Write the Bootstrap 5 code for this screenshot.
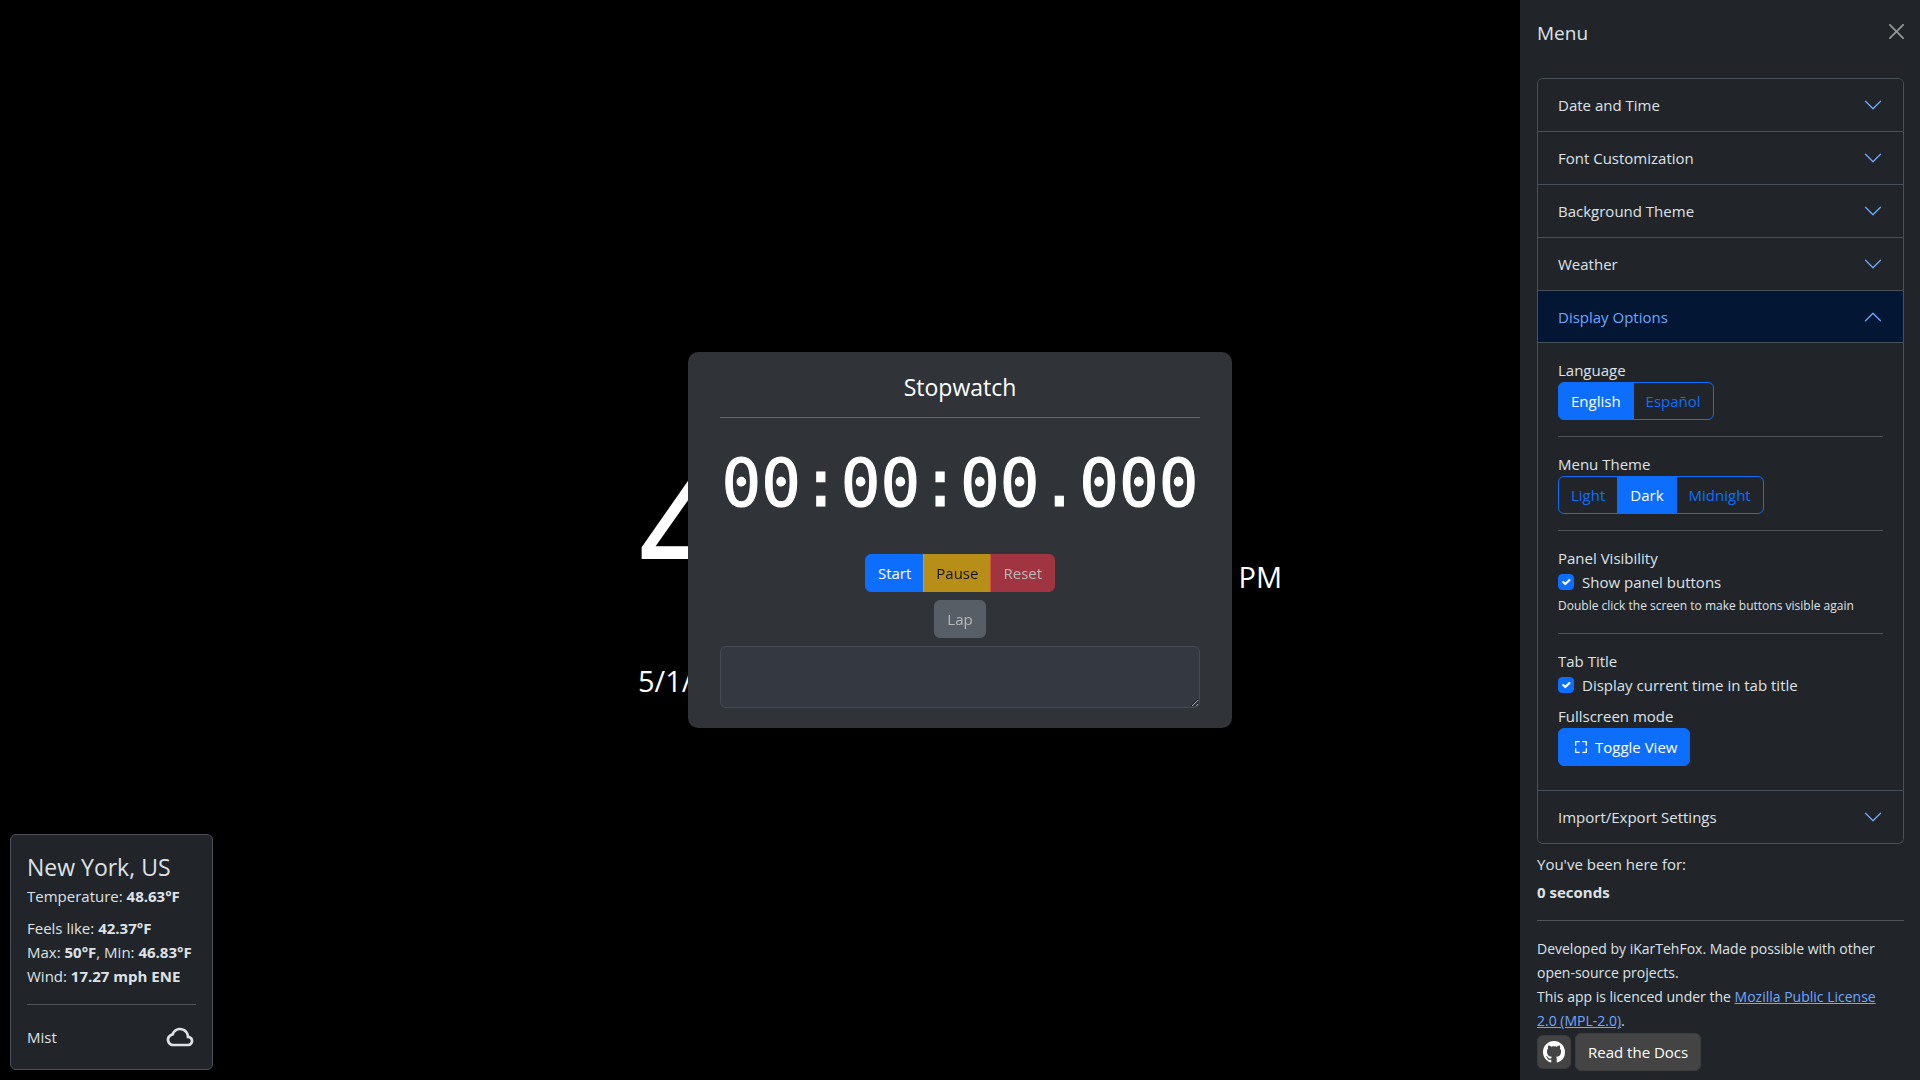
<!DOCTYPE html>
<html lang="en" data-bs-theme="dark">
<head>
<meta charset="utf-8">
<meta name="viewport" content="width=device-width, initial-scale=1">
<title>Clock</title>
<link href="https://cdn.jsdelivr.net/npm/bootstrap@5.3.0/dist/css/bootstrap.min.css" rel="stylesheet">
<style>
  :root { --ink: #dee2e6; --panel: #212529; --line: #495057; }
  body {
    font-family: "Open Sans", "Noto Sans", sans-serif;
    font-size: 15px; line-height: 24px;
    background: #000; color: var(--ink);
  }
  hr { border-color: #dee2e6; }
  .btn { font-size: 15px; line-height: 24px; }

  /* Clock */
  .clock { width: 644px; color: #fff; padding-top: 38px; }
  .clock-digits { font-size: 172px; line-height: 208px; }
  .clock-small { font-size: 29px; line-height: 40px; }
  .clock-date { margin-top: 36px; }

  /* Stopwatch */
  .stopwatch { width: 544px; background: #303338; color: #fff; padding: 16px 32px 20px; border-radius: 10px; }
  .stopwatch h1 { font-size: 23px; line-height: 38px; }
  .stopwatch hr { margin: 11px 0 16px; border-color: #fff; }
  .stopwatch-time {
    font-family: "DejaVu Sans Mono", "Liberation Mono", monospace;
    font-size: 66px; line-height: 92px; padding-top: 4px; white-space: nowrap;
    -webkit-text-stroke: 1px #fff;
  }
  .laps { height: 62px; min-height: 62px; background: #343840; border-color: #464b52; color: #fff; }

  /* Weather */
  .weather { background: var(--panel); border: 1px solid var(--line); border-radius: 6px; padding: 16px; margin: 10px; min-width: 203px; }
  .weather h2 { font-size: 23px; line-height: 32px; margin-bottom: 1px; color: var(--ink); }

  /* Side menu */
  .side-menu { --bs-offcanvas-width: 400px; background: var(--panel); color: var(--ink); border-left-color: transparent !important; }
  .side-menu .offcanvas-title { font-size: 19px; line-height: 26px; padding-top: 4px; color: var(--ink); }
  .side-menu .offcanvas-body { padding-bottom: 8px; scrollbar-width: none; }
  .accordion {
    --bs-accordion-bg: #212529; --bs-accordion-color: #dee2e6; --bs-accordion-btn-color: #dee2e6;
    --bs-accordion-border-color: #495057; --bs-accordion-active-bg: #031633; --bs-accordion-active-color: #6ea8fe;
  }
  .accordion-button { font-size: 15px; line-height: 20px; }
  .accordion-button::after { display: none; }
  .chev { width: 20px; height: 20px; margin-left: auto; color: #6ea8fe; }
  .opt-label { line-height: 22px; margin-bottom: 1px; }
  .form-check { font-size: 16px; }
  .form-check-label { font-size: 15px; }
  .form-check-input:checked { background-color: #0d6efd; border-color: #0d6efd; }
  .hint { font-size: 12px; line-height: 23px; }
  .credits { font-size: 14px; }
  .side-menu a:not(.btn) { color: #6ea8fe; }
  .btn-gray { background: #444; border-color: #3c3c3c; color: #fff; }
  .btn-square { width: 34px; height: 34px; }
</style>
<script src="https://cdn.jsdelivr.net/npm/bootstrap@5.3.0/dist/js/bootstrap.bundle.min.js"></script>
</head>
<body>
<svg class="d-none">
  <symbol id="down" viewBox="0 0 16 16"><path fill="currentColor" fill-rule="evenodd" d="M1.646 4.646a.5.5 0 0 1 .708 0L8 10.293l5.646-5.647a.5.5 0 0 1 .708.708l-6 6a.5.5 0 0 1-.708 0l-6-6a.5.5 0 0 1 0-.708z"/></symbol>
  <symbol id="up" viewBox="0 0 16 16"><path fill="currentColor" fill-rule="evenodd" d="M1.646 11.354a.5.5 0 0 0 .708 0L8 5.707l5.646 5.647a.5.5 0 0 0 .708-.708l-6-6a.5.5 0 0 0-.708 0l-6 6a.5.5 0 0 0 0 .708z"/></symbol>
</svg>

<main class="vh-100 d-flex align-items-center justify-content-center">
  <div class="clock">
    <div class="d-flex align-items-baseline justify-content-between">
      <span class="clock-digits">4:00:00</span>
      <span class="clock-small">PM</span>
    </div>
    <div class="clock-small clock-date">5/1/2024</div>
  </div>
</main>

<section class="position-fixed top-0 start-0 w-100 h-100 d-flex align-items-center justify-content-center">
  <div class="stopwatch text-center">
    <h1 class="fw-normal mb-0">Stopwatch</h1>
    <hr>
    <div class="stopwatch-time">00:00:00.000</div>
    <div class="btn-group mt-4" role="group" aria-label="Stopwatch controls">
      <button type="button" class="btn btn-primary">Start</button>
      <button type="button" class="btn btn-warning" disabled>Pause</button>
      <button type="button" class="btn btn-danger" disabled>Reset</button>
    </div>
    <div class="my-2"><button type="button" class="btn btn-secondary" disabled>Lap</button></div>
    <textarea class="form-control laps" aria-label="Laps" readonly></textarea>
  </div>
</section>

<aside class="weather position-fixed bottom-0 start-0">
  <h2 class="fw-normal">New York, US</h2>
  <p class="mb-2">Temperature: <b>48.63°F</b></p>
  <div>Feels like: <b>42.37°F</b></div>
  <div>Max: <b>50°F</b>, Min: <b>46.83°F</b></div>
  <div>Wind: <b>17.27 mph ENE</b></div>
  <hr>
  <div class="d-flex align-items-center justify-content-between">
    <span>Mist</span>
    <svg width="32" height="32" viewBox="0 0 24 24" fill="currentColor" aria-hidden="true"><path d="M18.944 11.112C18.507 7.67 15.56 5 12 5 9.244 5 6.85 6.611 5.757 9.15 3.609 9.792 2 11.82 2 14c0 2.757 2.243 5 5 5h11c2.206 0 4-1.794 4-4a4.01 4.01 0 0 0-3.056-3.888zM18 17H7c-1.654 0-3-1.346-3-3 0-1.404 1.199-2.756 2.673-3.015l.581-.102.192-.558C8.149 8.274 9.895 7 12 7c2.757 0 5 2.243 5 5v1h1c1.103 0 2 .897 2 2s-.897 2-2 2z"/></svg>
  </div>
</aside>

<div class="offcanvas offcanvas-end show side-menu" tabindex="-1" aria-labelledby="menuTitle" data-bs-scroll="true" data-bs-backdrop="false">
  <div class="offcanvas-header">
    <h5 class="offcanvas-title fw-normal" id="menuTitle">Menu</h5>
    <button type="button" class="btn-close" data-bs-dismiss="offcanvas" aria-label="Close"></button>
  </div>
  <div class="offcanvas-body">
    <div class="accordion" id="settings">
      <div class="accordion-item"><button type="button" class="accordion-button collapsed">Date and Time<svg class="chev"><use href="#down"/></svg></button></div>
      <div class="accordion-item"><button type="button" class="accordion-button collapsed">Font Customization<svg class="chev"><use href="#down"/></svg></button></div>
      <div class="accordion-item"><button type="button" class="accordion-button collapsed">Background Theme<svg class="chev"><use href="#down"/></svg></button></div>
      <div class="accordion-item"><button type="button" class="accordion-button collapsed">Weather<svg class="chev"><use href="#down"/></svg></button></div>
      <div class="accordion-item">
        <button type="button" class="accordion-button" data-bs-toggle="collapse" data-bs-target="#display" aria-expanded="true">Display Options<svg class="chev"><use href="#up"/></svg></button>
        <div id="display" class="accordion-collapse collapse show">
          <div class="accordion-body">
            <div class="opt-label">Language</div>
            <div class="btn-group" role="group" aria-label="Language">
              <input type="radio" class="btn-check" name="lang" id="en" checked><label class="btn btn-outline-primary" for="en">English</label>
              <input type="radio" class="btn-check" name="lang" id="es"><label class="btn btn-outline-primary" for="es">Español</label>
            </div>
            <hr>
            <div class="opt-label">Menu Theme</div>
            <div class="btn-group" role="group" aria-label="Menu Theme">
              <input type="radio" class="btn-check" name="theme" id="light"><label class="btn btn-outline-primary" for="light">Light</label>
              <input type="radio" class="btn-check" name="theme" id="dark" checked><label class="btn btn-outline-primary" for="dark">Dark</label>
              <input type="radio" class="btn-check" name="theme" id="midnight"><label class="btn btn-outline-primary" for="midnight">Midnight</label>
            </div>
            <hr>
            <div class="opt-label">Panel Visibility</div>
            <div class="form-check mb-0">
              <input class="form-check-input" type="checkbox" id="panels" checked>
              <label class="form-check-label" for="panels">Show panel buttons</label>
            </div>
            <div class="hint">Double click the screen to make buttons visible again</div>
            <hr>
            <div class="opt-label">Tab Title</div>
            <div class="form-check mb-2">
              <input class="form-check-input" type="checkbox" id="tabtime" checked>
              <label class="form-check-label" for="tabtime">Display current time in tab title</label>
            </div>
            <div class="opt-label">Fullscreen mode</div>
            <button type="button" class="btn btn-primary mb-2 d-inline-flex align-items-center gap-1"><svg width="20" height="16" viewBox="0 0 24 24" fill="currentColor" aria-hidden="true"><path d="M5 5h5V3H3v7h2zm5 14H5v-5H3v7h7zm11-5h-2v5h-5v2h7zm-2-4h2V3h-7v2h5z"/></svg>Toggle View</button>
          </div>
        </div>
      </div>
      <div class="accordion-item"><button type="button" class="accordion-button collapsed">Import/Export Settings<svg class="chev"><use href="#down"/></svg></button></div>
    </div>
    <div class="mt-2 mb-1">You've been here for:</div>
    <div><b>0 seconds</b></div>
    <hr>
    <div class="credits">
      Developed by iKarTehFox. Made possible with other open-source projects.<br>
      This app is licenced under the <a href="#mpl">Mozilla Public License 2.0&nbsp;(MPL-2.0)</a>.
    </div>
    <div class="d-flex align-items-center gap-1">
      <a href="#github" class="btn btn-gray btn-square p-0 d-flex align-items-center justify-content-center" aria-label="GitHub"><svg width="22" height="22" viewBox="0 0 16 16" fill="currentColor"><path d="M8 0C3.58 0 0 3.58 0 8c0 3.54 2.29 6.53 5.47 7.59.4.07.55-.17.55-.38 0-.19-.01-.82-.01-1.49-2.01.37-2.53-.49-2.69-.94-.09-.23-.48-.94-.82-1.13-.28-.15-.68-.52-.01-.53.63-.01 1.08.58 1.23.82.72 1.21 1.87.87 2.33.66.07-.52.28-.87.51-1.07-1.78-.2-3.64-.89-3.64-3.95 0-.87.31-1.59.82-2.15-.08-.2-.36-1.02.08-2.12 0 0 .67-.21 2.2.82.64-.18 1.32-.27 2-.27.68 0 1.36.09 2 .27 1.53-1.04 2.2-.82 2.2-.82.44 1.1.16 1.92.08 2.12.51.56.82 1.27.82 2.15 0 3.07-1.87 3.75-3.65 3.95.29.25.54.73.54 1.48 0 1.07-.01 1.93-.01 2.2 0 .21.15.46.55.38A8.012 8.012 0 0 0 16 8c0-4.42-3.58-8-8-8z"/></svg></a>
      <a href="#docs" class="btn btn-gray">Read the Docs</a>
    </div>
  </div>
</div>
</body>
</html>
